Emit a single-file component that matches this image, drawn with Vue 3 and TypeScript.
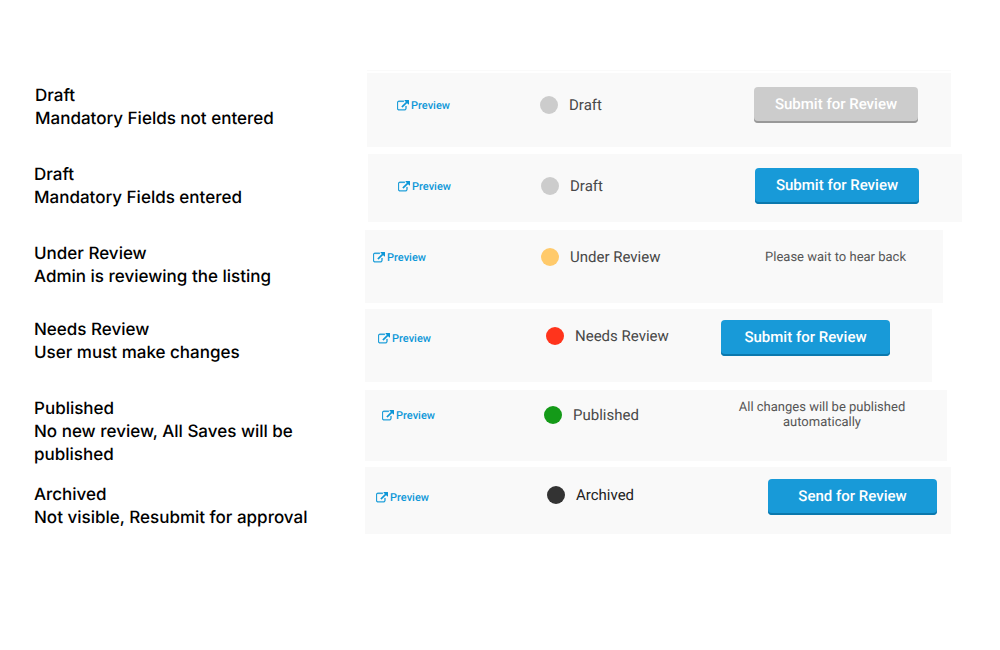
<script setup lang="ts">
interface Listing {
  id: string
  title: string
  detail: string
  status: string
  button?: string
  disabled?: boolean
  message?: string
}

const listings: Listing[] = [
  { id: 'incomplete', title: 'Draft', detail: 'Mandatory Fields not entered', status: 'Draft', button: 'Submit for Review', disabled: true },
  { id: 'complete', title: 'Draft', detail: 'Mandatory Fields entered', status: 'Draft', button: 'Submit for Review' },
  { id: 'under-review', title: 'Under Review', detail: 'Admin is reviewing the listing', status: 'Under Review', message: 'Please wait to hear back' },
  { id: 'needs-review', title: 'Needs Review', detail: 'User must make changes', status: 'Needs Review', button: 'Submit for Review' },
  { id: 'published', title: 'Published', detail: 'No new review, All Saves will be published', status: 'Published', message: 'All changes will be published automatically' },
  { id: 'archived', title: 'Archived', detail: 'Not visible, Resubmit for approval', status: 'Archived', button: 'Send for Review' },
]
</script>

<template>
  <main class="board">
    <section v-for="item in listings" :key="item.id" class="row" :class="item.id">
      <div class="note">
        <h2>{{ item.title }}</h2>
        <p>{{ item.detail }}</p>
      </div>
      <div class="card">
        <a class="preview" href="#">
          <svg viewBox="0 0 1792 1792" aria-hidden="true">
            <path
              d="M1408 928v320q0 119-84.500 203.500t-203.500 84.500h-832q-119 0-203.500-84.500t-84.500-203.500v-832q0-119 84.500-203.500t203.500-84.500h704q14 0 23 9t9 23v64q0 14-9 23t-23 9h-704q-66 0-113 47t-47 113v832q0 66 47 113t113 47h832q66 0 113-47t47-113v-320q0-14 9-23t23-9h64q14 0 23 9t9 23zm384-864v512q0 26-19 45t-45 19-45-19l-176-176-652 652q-10 10-23 10t-23-10l-114-114q-10-10-10-23t10-23l652-652-176-176q-19-19-19-45t19-45 45-19h512q26 0 45 19t19 45z"
            />
          </svg>
          <span>Preview</span>
        </a>
        <div class="status">
          <span class="dot"></span>
          <span>{{ item.status }}</span>
        </div>
        <button v-if="item.button" type="button" class="action" :disabled="item.disabled">{{ item.button }}</button>
        <p v-else class="message">{{ item.message }}</p>
      </div>
    </section>
  </main>
</template>

<style>
body {
  margin: 0;
  background: #fff;
}
</style>

<style scoped>
.board {
  padding: 73px 0 24px;
  font-family: Roboto, "Liberation Sans", sans-serif;
  text-rendering: geometricPrecision;
}

.row {
  --note-top: 10px;
  --preview-left: 30px;
  --status-left: 173px;
  --dot: #ccc;
  display: grid;
  grid-template-columns: 365px minmax(0, 1fr);
  align-items: start;
}

.note {
  padding: var(--note-top) 28px 0 34px;
  color: #000;
  font: 500 17px/23px Inter, "Open Sans", sans-serif;
}

.note h2,
.note p {
  margin: 0;
  font: inherit;
}

.card {
  display: grid;
  grid-template-columns: var(--status-left) 1fr auto;
  align-items: center;
  background: #f9f9f9;
}

.preview {
  display: flex;
  align-items: center;
  gap: 2px;
  padding: 1px 0 0 var(--preview-left);
  color: #0d97d8;
  font-size: 11px;
  font-weight: 500;
  line-height: 16px;
  text-decoration: none;
}

.preview svg {
  width: 12px;
  height: 12px;
  fill: currentColor;
  stroke: currentColor;
  stroke-width: 50;
}

.status {
  display: flex;
  align-items: center;
  gap: 11px;
  color: #484848;
  font-size: 15px;
  line-height: 20px;
  white-space: nowrap;
}

.dot {
  width: 18px;
  height: 18px;
  border-radius: 50%;
  background: var(--dot);
}

.action {
  min-width: 164px;
  height: 36px;
  padding: 0 16px 2px;
  border: 0;
  border-radius: 4px;
  background: #189ad8;
  box-shadow: inset 0 -2px 0 #0b78ad;
  color: #fff;
  font: 500 15px/20px Roboto, "Liberation Sans", sans-serif;
  text-rendering: inherit;
  cursor: pointer;
}

.action:disabled {
  background: #ccc;
  box-shadow: inset 0 -2px 0 #999;
  cursor: default;
}

.message {
  display: grid;
  align-items: center;
  min-height: 36px;
  max-width: 168px;
  margin: 0;
  color: #555;
  font-size: 13px;
  line-height: 15px;
  text-align: center;
}

.incomplete {
  --note-top: 12px;
  grid-template-columns: 367px minmax(0, 1fr);
}

.incomplete .note {
  padding-left: 35px;
}

.incomplete .card {
  margin: 0 49px 7px 0;
  padding: 14px 33px 24px 0;
  box-shadow: 0 -2px 0 #fff, 0 -3px 0 #fafafa;
}

.complete {
  grid-template-columns: 368px minmax(0, 1fr);
}

.complete .card {
  margin: 0 38px 8px 0;
  padding: 14px 43px 18px 0;
}

.under-review {
  --note-top: 13px;
  --preview-left: 8px;
  --status-left: 176px;
  --dot: #ffca6b;
}

.under-review .card {
  margin: 0 57px 6px 0;
  padding: 9px 37px 28px 0;
}

.needs-review {
  --preview-left: 13px;
  --status-left: 181px;
  --dot: #ff341c;
}

.needs-review .card {
  margin: 0 68px 8px 0;
  padding: 11px 42px 26px 0;
}

.published {
  --note-top: 8px;
  --preview-left: 17px;
  --status-left: 179px;
  --dot: #149a18;
}

.published .card {
  margin: 0 53px 6px 0;
  padding: 7px 41px 28px 0;
}

.archived {
  --note-top: 17px;
  --preview-left: 11px;
  --status-left: 182px;
  --dot: #333;
}

.archived .card {
  margin-right: 49px;
  padding: 12px 14px 19px 0;
}

.archived .status {
  color: #222;
}

.needs-review .status,
.archived .status {
  padding-bottom: 4px;
}

.needs-review .action,
.archived .action {
  min-width: 169px;
}
</style>
